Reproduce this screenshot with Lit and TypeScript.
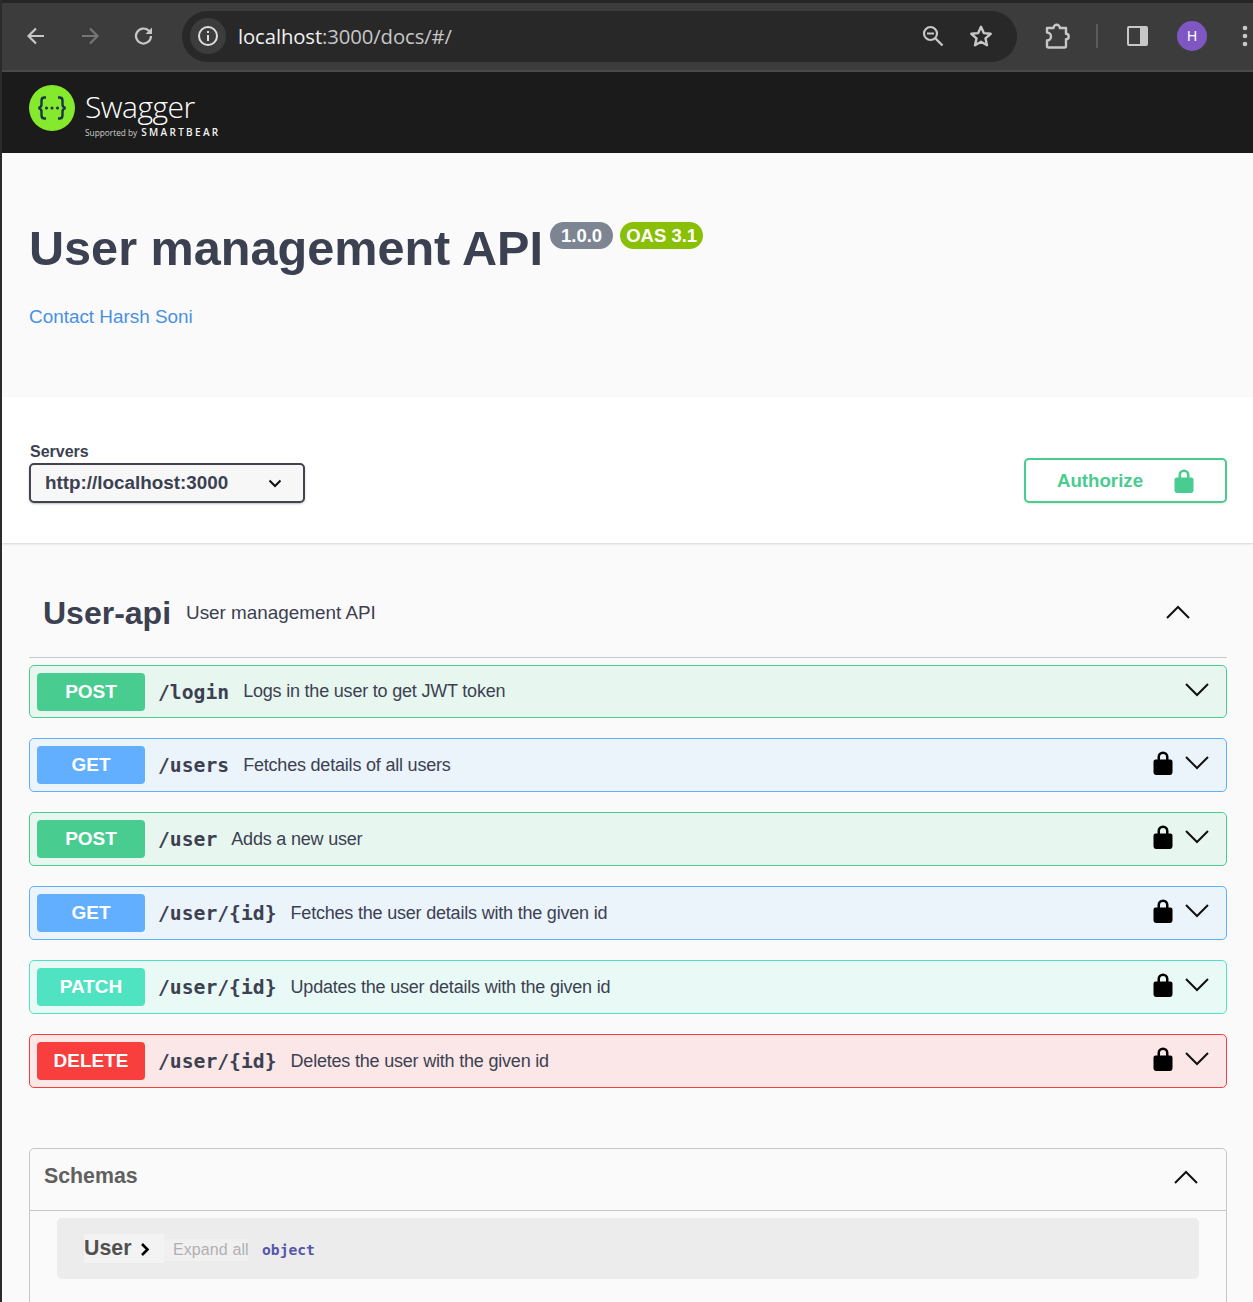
import { LitElement, html, css, svg } from 'lit';
import { customElement } from 'lit/decorators.js';

const routes = [
  { method: 'POST', path: '/login', text: 'Logs in the user to get JWT token', locked: false },
  { method: 'GET', path: '/users', text: 'Fetches details of all users', locked: true },
  { method: 'POST', path: '/user', text: 'Adds a new user', locked: true },
  { method: 'GET', path: '/user/{id}', text: 'Fetches the user details with the given id', locked: true },
  { method: 'PATCH', path: '/user/{id}', text: 'Updates the user details with the given id', locked: true },
  { method: 'DELETE', path: '/user/{id}', text: 'Deletes the user with the given id', locked: true },
];

const lockPath = 'M15.500 8.500V6a5.500 5.500 0 0 0-11 0v2.500H2.600A2.100 2.100 0 0 0 .5 10.600v11A2.400 2.400 0 0 0 2.900 24h14.200a2.400 2.400 0 0 0 2.400-2.400v-11a2.100 2.100 0 0 0-2.100-2.100ZM7 8.500V6a3 3 0 0 1 6 0v2.500Z';

const lock = (fill: string) => svg`<svg class="lock" width="20" height="24" viewBox="0 0 20 24"><path d=${lockPath} fill=${fill} fill-rule="evenodd"/></svg>`;

const chevron = (up: boolean) => svg`<svg class="chev" width="24" height="14" viewBox="0 0 24 14"><path d=${up ? 'M1 13 12 2l11 11' : 'M1 1l11 11L23 1'} fill="none" stroke="#111" stroke-width="2"/></svg>`;

@customElement('app-root')
export class AppRoot extends LitElement {
  static styles = css`
    :host {
      display: block;
      width: 1253px;
      height: 1302px;
      overflow: hidden;
      box-sizing: border-box;
      border-left: 2px solid #2b2b2b;
      background: #fafafa;
      font-family: 'Liberation Sans', Arial, sans-serif;
      color: #3b4151;
    }

    .chrome {
      height: 72px;
      box-sizing: border-box;
      background: #3c3c3c;
      border-top: 3px solid #262626;
      border-bottom: 2px solid #4a4a4a;
      display: flex;
      align-items: center;
      padding-left: 22px;
    }
    .chrome svg { flex: none; display: block; }
    .nav { display: flex; align-items: center; gap: 30px; width: 158px; margin-top: -1px; }
    .omnibox {
      width: 835px;
      height: 51px;
      margin-top: -1px;
      box-sizing: border-box;
      border-radius: 26px;
      background: #282828;
      display: flex;
      align-items: center;
      padding: 0 24px 0 8px;
    }
    .site {
      width: 36px;
      height: 36px;
      border-radius: 50%;
      background: #3c3c3c;
      display: flex;
      align-items: center;
      justify-content: center;
      margin-right: 12px;
    }
    .url {
      flex: 1;
      font-family: 'Open Sans', sans-serif;
      font-size: 20.3px;
      letter-spacing: -0.1px;
      color: #c7c7c7;
    }
    .url b { font-weight: 400; color: #f0f0f0; }
    .omni-icons { display: flex; align-items: center; gap: 24px; }
    .tools { display: flex; align-items: center; margin-top: -1px; margin-left: 27px; }
    .sep { width: 2px; height: 24px; background: #5c5c5c; margin: 0 28px 0 26px; }
    .avatar {
      width: 30px;
      height: 30px;
      border-radius: 50%;
      background: #7e57c2;
      color: #fff;
      font-size: 14px;
      display: flex;
      align-items: center;
      justify-content: center;
      margin: 0 35px 0 29px;
    }

    .topbar {
      height: 81px;
      background: #1b1b1b;
      display: flex;
      align-items: center;
      padding: 0 0 9px 27px;
      box-sizing: border-box;
    }
    .brand { margin: 10px 0 0 10px; color: #fff; }
    .brand-name {
      font-family: 'Open Sans', sans-serif;
      font-weight: 300;
      font-size: 30px;
      line-height: 36px;
      letter-spacing: -0.5px;
      margin-top: 2px;
    }
    .brand-sub {
      display: flex;
      align-items: baseline;
      gap: 4px;
      margin-top: 1px;
      font-family: 'Open Sans', sans-serif;
      font-size: 8.3px;
      line-height: 12px;
      color: #cfcfcf;
    }
    .brand-sub b {
      font-size: 10px;
      font-weight: 600;
      letter-spacing: 2.3px;
      color: #f2f2f2;
    }

    .info { height: 244px; box-sizing: border-box; padding: 65px 0 0 27px; }
    .title { display: flex; align-items: flex-start; height: 62px; }
    h1 { margin: -1px 0 0; font-size: 48.6px; line-height: 62px; font-weight: 700; color: #3b4151; }
    .badge {
      height: 27px;
      border-radius: 14px;
      margin: 4px 0 0 7px;
      padding: 0 6px;
      font-size: 18.5px;
      line-height: 27px;
      font-weight: 700;
      color: #fff;
      background: #7d8492;
    }
    .badge.first { padding: 0 11px; margin-left: 7px; }
    .badge.oas { background: #89bf04; }
    .contact { margin-top: 25px; font-size: 18.9px; line-height: 24px; color: #4990e2; }

    .scheme {
      height: 146px;
      box-sizing: border-box;
      background: #fff;
      box-shadow: 0 1px 2px rgba(0, 0, 0, 0.15);
      display: flex;
      justify-content: space-between;
      padding: 45px 26px 0 27px;
      position: relative;
    }
    .servers-label { font-size: 16px; line-height: 18px; font-weight: 700; margin: 1px 0 0 1px; color: #3b4151; }
    .select {
      width: 276px;
      height: 40px;
      margin-top: 2px;
      box-sizing: border-box;
      border: 2px solid #41444e;
      border-radius: 5px;
      background: #f7f7f7;
      box-shadow: 0 1px 2px rgba(0, 0, 0, 0.25);
      display: flex;
      align-items: center;
      justify-content: space-between;
      padding: 0 21px 0 14px;
      font-size: 18.85px;
      font-weight: 700;
    }
    .authorize {
      width: 203px;
      height: 45px;
      margin-top: 16px;
      box-sizing: border-box;
      border: 2px solid #49cc90;
      border-radius: 5px;
      background: #fff;
      box-shadow: 0 1px 2px rgba(0, 0, 0, 0.1);
      display: flex;
      align-items: center;
      padding-left: 31px;
      font-size: 18.67px;
      font-weight: 700;
      color: #49cc90;
    }
    .authorize .lock { margin-left: 31px; }

    .ops { padding: 0 26px 0 27px; }
    .tag {
      height: 115px;
      box-sizing: border-box;
      border-bottom: 1px solid #c8c8c8;
      display: flex;
      align-items: center;
      padding: 27px 37px 0 14px;
    }
    .tag h2 { margin: 0; font-size: 32px; font-weight: 700; color: #3b4151; }
    .tag span { flex: 1; margin: 0 0 2px 15px; font-size: 18.87px; }
    .tag .chev { margin-bottom: 3px; }

    .list { display: flex; flex-direction: column; gap: 20px; margin-top: 7px; }
    .row {
      height: 54px;
      box-sizing: border-box;
      border: 1px solid;
      border-radius: 5px;
      display: flex;
      align-items: center;
      padding: 0 17px 0 7px;
    }
    .row:first-child { height: 53px; }
    .POST { background: #e8f6f0; border-color: #49cc90; }
    .GET { background: #ebf3fb; border-color: #61affe; }
    .PATCH { background: #e9f9f5; border-color: #50e3c2; }
    .DELETE { background: #fbe7e7; border-color: #f93e3e; }
    .method {
      width: 108px;
      height: 38px;
      border-radius: 4px;
      color: #fff;
      font-size: 19px;
      font-weight: 700;
      line-height: 37px;
      text-align: center;
      flex: none;
    }
    .POST .method { background: #49cc90; }
    .GET .method { background: #61affe; }
    .PATCH .method { background: #50e3c2; }
    .DELETE .method { background: #f93e3e; }
    .path {
      margin-left: 13px;
      font-family: 'DejaVu Sans Mono', monospace;
      font-size: 19.7px;
      font-weight: 700;
      padding-top: 1px;
    }
    .row-text { flex: 1; margin-left: 14px; font-size: 18px; letter-spacing: -0.2px; }
    .row .lock { margin-right: 12px; margin-bottom: 5px; }
    .row .chev { margin-bottom: 4px; }

    .schemas {
      margin-top: 60px;
      height: 200px;
      box-sizing: border-box;
      border: 1px solid #c8c8c8;
      border-radius: 5px 5px 0 0;
    }
    .schemas-head {
      height: 62px;
      box-sizing: border-box;
      border-bottom: 1px solid #c8c8c8;
      display: flex;
      align-items: center;
      justify-content: space-between;
      padding: 0 28px 6px 14px;
      font-size: 21.33px;
      font-weight: 700;
      color: #606060;
    }
    .model {
      height: 61px;
      margin: 7px 27px 0;
      border-radius: 5px;
      background: #ececec;
      display: flex;
      align-items: center;
      padding-left: 27px;
    }
    .model-name {
      display: flex;
      align-items: center;
      gap: 8px;
      height: 29px;
      width: 80px;
      background: #f3f3f3;
      font-size: 21.33px;
      font-weight: 700;
      color: #505050;
    }
    .expand {
      width: 84px;
      height: 22px;
      line-height: 22px;
      box-sizing: border-box;
      padding-left: 9px;
      margin-top: 2px;
      background: #f0f0f0;
      font-size: 16px;
      letter-spacing: 0.1px;
      color: #b0b0b0;
      white-space: nowrap;
    }
    .type {
      margin: 1px 0 0 14px;
      font-family: 'DejaVu Sans Mono', monospace;
      font-size: 14.67px;
      font-weight: 700;
      color: #55a;
    }
  `;

  private browserBar() {
    return html`
      <div class="chrome">
        <div class="nav">
          <svg width="24" height="24" viewBox="0 0 24 24"><path d="M20 12H5M12 4.500 4.500 12l7.500 7.500" fill="none" stroke="#c7c7c7" stroke-width="2.200"/></svg>
          <svg width="24" height="24" viewBox="0 0 24 24"><path d="M4 12h15M12 4.500l7.500 7.500-7.500 7.500" fill="none" stroke="#757575" stroke-width="2.200"/></svg>
          <svg width="24" height="24" viewBox="0 0 24 24"><path d="M19 12a7.500 7.500 0 1 1-2.300-5.400L19 9" fill="none" stroke="#c7c7c7" stroke-width="2.200"/><path d="M20 3.500V10h-6.500z" fill="#c7c7c7"/></svg>
        </div>
        <div class="omnibox">
          <div class="site">
            <svg width="22" height="22" viewBox="0 0 22 22"><circle cx="11" cy="11" r="9" fill="none" stroke="#dedede" stroke-width="2"/><path d="M10 10h2v6h-2zM10 6h2v2h-2z" fill="#dedede"/></svg>
          </div>
          <div class="url"><b>localhost</b>:3000/docs/#/</div>
          <div class="omni-icons">
            <svg width="24" height="24" viewBox="0 0 24 24"><circle cx="9.500" cy="9.500" r="6.500" fill="none" stroke="#c7c7c7" stroke-width="2.200"/><path d="m14.500 14.500 7 7" stroke="#c7c7c7" stroke-width="2.400"/><path d="M6 8.500h7v2H6z" fill="#c7c7c7"/></svg>
            <svg width="24" height="24" viewBox="0 0 24 24"><path d="m12 2.800 2.800 6.300 6.900.7-5.200 4.600 1.500 6.800-6-3.500-6 3.500 1.500-6.800-5.200-4.600 6.900-.7z" fill="none" stroke="#c7c7c7" stroke-width="2.400" stroke-linejoin="round"/></svg>
          </div>
        </div>
        <div class="tools">
          <svg width="26" height="26" viewBox="0 0 26 26"><path d="M3 5h6.500a3.200 3.200 0 0 1 6.400 0H22v5.800a2.700 2.700 0 0 1 0 5.400V23a1.500 1.500 0 0 1-1.500 1.500H4.500A1.500 1.500 0 0 1 3 23v-5.500a4 4 0 0 0 0-8Z" fill="none" stroke="#c7c7c7" stroke-width="2.400" stroke-linejoin="round"/></svg>
          <div class="sep"></div>
          <svg width="22" height="22" viewBox="0 0 22 22"><rect x="1" y="1" width="21" height="20" rx="2" fill="#c7c7c7"/><rect x="3" y="3" width="11" height="16" fill="#3c3c3c"/></svg>
          <div class="avatar">H</div>
          <svg width="6" height="24" viewBox="0 0 6 24"><circle cx="3" cy="4" r="2.300" fill="#c7c7c7"/><circle cx="3" cy="12" r="2.300" fill="#c7c7c7"/><circle cx="3" cy="20" r="2.300" fill="#c7c7c7"/></svg>
        </div>
      </div>
    `;
  }

  render() {
    return html`
      ${this.browserBar()}
      <div class="topbar">
        <svg width="46" height="46" viewBox="0 0 46 46">
          <circle cx="23" cy="23" r="23" fill="#85ea2d"/>
          <path d="M17 12.500h-1.500c-2 0-3 1-3 3v4c0 2-1 3-3 3.500 2 .5 3 1.500 3 3.500v4c0 2 1 3 3 3H17M29 12.500h1.500c2 0 3 1 3 3v4c0 2 1 3 3 3.500-2 .5-3 1.500-3 3.500v4c0 2-1 3-3 3H29" fill="none" stroke="#173647" stroke-width="2.400"/>
          <circle cx="17.500" cy="23" r="1.500" fill="#173647"/><circle cx="23" cy="23" r="1.500" fill="#173647"/><circle cx="28.500" cy="23" r="1.500" fill="#173647"/>
        </svg>
        <div class="brand">
          <div class="brand-name">Swagger</div>
          <div class="brand-sub">Supported by <b>SMARTBEAR</b></div>
        </div>
      </div>

      <div class="info">
        <div class="title">
          <h1>User management API</h1>
          <div class="badge first">1.0.0</div>
          <div class="badge oas">OAS 3.1</div>
        </div>
        <div class="contact">Contact Harsh Soni</div>
      </div>

      <div class="scheme">
        <div>
          <div class="servers-label">Servers</div>
          <div class="select">
            http://localhost:3000
            <svg width="14" height="9" viewBox="0 0 14 9"><path d="m1.500 1.500 5.500 5.500 5.500-5.500" fill="none" stroke="#111" stroke-width="2"/></svg>
          </div>
        </div>
        <div class="authorize">Authorize ${lock('#49cc90')}</div>
      </div>

      <div class="ops">
        <div class="tag">
          <h2>User-api</h2>
          <span>User management API</span>
          ${chevron(true)}
        </div>
        <div class="list">
          ${routes.map((r) => html`
            <div class="row ${r.method}">
              <div class="method">${r.method}</div>
              <div class="path">${r.path}</div>
              <div class="row-text">${r.text}</div>
              ${r.locked ? lock('#000') : ''}
              ${chevron(false)}
            </div>
          `)}
        </div>
        <div class="schemas">
          <div class="schemas-head">Schemas ${chevron(true)}</div>
          <div class="model">
            <div class="model-name">User
              <svg width="12" height="14" viewBox="0 0 12 14"><path d="m3 2 5.500 5.500L3 13" fill="none" stroke="#000" stroke-width="2.600"/></svg>
            </div>
            <div class="expand">Expand all</div>
            <div class="type">object</div>
          </div>
        </div>
      </div>
    `;
  }
}
